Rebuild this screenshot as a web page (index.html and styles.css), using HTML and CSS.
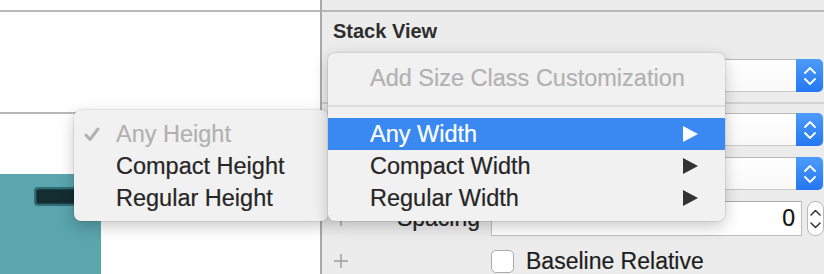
FILE: index.html
```html
<!DOCTYPE html>
<html>
<head>
<meta charset="utf-8">
<link rel="stylesheet" href="styles.css">
</head>
<body>
<div class="app">
  <div class="canvas">
    <div class="strip"></div>
    <div class="scene-row"></div>
    <div class="scene">
      <div class="teal-view"><div class="pill"></div></div>
    </div>
  </div>
  <div class="inspector">
    <div class="strip"></div>
    <h2 class="section-title">Stack View</h2>
    <div class="row r1">
      <div class="lead"></div>
      <div class="popup"><div class="popup-field"></div><div class="popup-step"><svg width="14" height="22" viewBox="0 0 14 22"><polyline points="2,8 7,3 12,8" class="chev-w"/><polyline points="2,14 7,19 12,14" class="chev-w"/></svg></div></div>
    </div>
    <div class="divider"></div>
    <div class="row r2">
      <div class="lead"></div>
      <div class="popup"><div class="popup-field"></div><div class="popup-step"><svg width="14" height="22" viewBox="0 0 14 22"><polyline points="2,8 7,3 12,8" class="chev-w"/><polyline points="2,14 7,19 12,14" class="chev-w"/></svg></div></div>
    </div>
    <div class="row r3">
      <div class="lead"></div>
      <div class="popup"><div class="popup-field"></div><div class="popup-step"><svg width="14" height="22" viewBox="0 0 14 22"><polyline points="2,8 7,3 12,8" class="chev-w"/><polyline points="2,14 7,19 12,14" class="chev-w"/></svg></div></div>
    </div>
    <div class="row r4">
      <div class="lead"><svg class="plus" width="14" height="14" viewBox="0 0 14 14"><path d="M7 0V14M0 7H14"/></svg><span class="label">Spacing</span></div>
      <div class="number"><div class="num-field">0</div><div class="stepper"><svg width="13" height="24" viewBox="0 0 13 24"><polyline points="2,8 6.5,3.5 11,8" class="chev-d"/><polyline points="2,16 6.5,20.5 11,16" class="chev-d"/></svg></div></div>
    </div>
    <div class="row r5">
      <div class="lead"><svg class="plus" width="14" height="14" viewBox="0 0 14 14"><path d="M7 0V14M0 7H14"/></svg></div>
      <div class="checkline"><span class="checkbox"></span><span class="check-label">Baseline Relative</span></div>
    </div>
  </div>
</div>

<div class="menu submenu">
  <div class="item disabled"><span class="tick"><svg width="16" height="15" viewBox="0 0 16 15"><path d="M2 8 L6 12.5 L14 2"/></svg></span>Any Height</div>
  <div class="item"><span class="tick"></span>Compact Height</div>
  <div class="item"><span class="tick"></span>Regular Height</div>
</div>

<div class="menu mainmenu">
  <div class="item disabled">Add Size Class Customization</div>
  <div class="sep"></div>
  <div class="item active">Any Width<svg class="arrow" width="15" height="16" viewBox="0 0 15 16"><polygon points="0,0 15,8 0,16"/></svg></div>
  <div class="item">Compact Width<svg class="arrow" width="15" height="16" viewBox="0 0 15 16"><polygon points="0,0 15,8 0,16"/></svg></div>
  <div class="item">Regular Width<svg class="arrow" width="15" height="16" viewBox="0 0 15 16"><polygon points="0,0 15,8 0,16"/></svg></div>
</div>
</body>
</html>
```

FILE: styles.css
```css
html, body {
  margin: 0;
  padding: 0;
}
body {
  width: 824px;
  height: 274px;
  overflow: hidden;
  font-family: "Liberation Sans", Arial, sans-serif;
  background: #ffffff;
}
.app {
  display: flex;
  width: 824px;
  height: 274px;
}
.canvas {
  width: 320px;
  border-right: 2px solid #a9a9a9;
  background: #ffffff;
  display: flex;
  flex-direction: column;
}
.strip {
  height: 10px;
  border-bottom: 2px solid #b8b8b8;
  flex: none;
}
.scene-row {
  height: 100px;
  border-bottom: 2px solid #b8b8b8;
  flex: none;
}
.scene {
  flex: 1;
  padding-top: 60px;
}
.teal-view {
  width: 101px;
  height: 100px;
  background: #5aa5ae;
  padding-top: 13px;
  box-sizing: border-box;
}
.pill {
  margin-left: 34px;
  width: 60px;
  height: 19px;
  box-sizing: border-box;
  border: 2px solid #2f6c73;
  border-radius: 4px;
  background: #142d30;
  box-shadow: inset 0 0 0 1px #1d4347;
}
.inspector {
  flex: 1;
  background: #ececec;
  display: flex;
  flex-direction: column;
}
.section-title {
  margin: 0;
  padding: 7px 0 0 11px;
  font-size: 20px;
  line-height: 24px;
  font-weight: bold;
  color: #2e2e2e;
}
.row {
  display: grid;
  grid-template-columns: 157px 1fr;
  padding-left: 12px;
  align-items: center;
}
.r1 { margin-top: 16px; }
.r2 { margin-top: 9px; }
.r3 { margin-top: 11px; }
.r4 { margin-top: 11px; }
.r5 { margin-top: 14px; }
.divider {
  margin-top: 10px;
  height: 2px;
  background: #d2d2d2;
}
.lead {
  display: flex;
  align-items: center;
}
.plus path {
  stroke: #9c9c9c;
  stroke-width: 1.4;
  fill: none;
}
.label {
  margin-left: auto;
  padding-right: 11px;
  font-size: 23px;
  color: #222222;
  -webkit-text-stroke: 0.2px #222222;
}
.popup {
  display: flex;
  height: 33px;
  margin-right: 1px;
}
.popup-field {
  flex: 1;
  background: linear-gradient(#ffffff, #f9f9f9);
  border: 1px solid #c9c9c9;
  border-top-color: #b9b9b9;
  border-right: none;
  border-radius: 4px 0 0 4px;
}
.popup-step {
  width: 27px;
  border-radius: 0 5px 5px 0;
  background: linear-gradient(#4d9bf9, #2477f1);
  display: flex;
  align-items: center;
  justify-content: center;
}
.chev-w {
  fill: none;
  stroke: #ffffff;
  stroke-width: 1.8;
  stroke-linecap: round;
  stroke-linejoin: round;
}
.chev-d {
  fill: none;
  stroke: #3a3a3a;
  stroke-width: 1.6;
  stroke-linecap: round;
  stroke-linejoin: round;
}
.number {
  display: flex;
  gap: 5px;
  height: 35px;
}
.num-field {
  flex: 1;
  background: #ffffff;
  border: 1px solid #bdbdbd;
  border-top-color: #acacac;
  text-align: right;
  padding-right: 6px;
  font-size: 23px;
  line-height: 33px;
  color: #111111;
  -webkit-text-stroke: 0.2px #111111;
}
.stepper {
  width: 17px;
  box-sizing: border-box;
  border: 1px solid #b8b8b8;
  border-radius: 8px;
  background: #ffffff;
  display: flex;
  align-items: center;
  justify-content: center;
}
.checkline {
  display: flex;
  align-items: center;
  gap: 12px;
  height: 22px;
}
.checkbox {
  width: 23px;
  height: 23px;
  box-sizing: border-box;
  border: 1px solid #ababab;
  border-radius: 5px;
  background: #ffffff;
}
.check-label {
  font-size: 23px;
  color: #1e1e1e;
  -webkit-text-stroke: 0.2px #1e1e1e;
}
.menu {
  position: absolute;
  box-sizing: border-box;
  background: #f1f1f1;
  border-radius: 7px;
  box-shadow: 0 5px 16px rgba(0, 0, 0, 0.22), 0 0 0 1px rgba(0, 0, 0, 0.07);
  font-size: 23.5px;
  color: #262626;
}
.submenu {
  left: 74px;
  top: 110px;
  width: 254px;
  height: 111px;
  padding: 8px 0 7px;
}
.mainmenu {
  left: 328px;
  top: 53px;
  width: 397px;
  height: 168px;
  padding: 9px 0 7px;
}
.item {
  height: 32px;
  display: flex;
  align-items: center;
  padding-right: 27px;
  white-space: nowrap;
  -webkit-text-stroke: 0.2px currentColor;
}
.mainmenu .item {
  padding-left: 42px;
}
.submenu .item {
  padding-left: 10px;
}
.tick {
  width: 32px;
  display: flex;
  align-items: center;
}
.tick path {
  fill: none;
  stroke: #b1b1b1;
  stroke-width: 3;
  stroke-linecap: round;
  stroke-linejoin: round;
}
.disabled {
  color: #b1b1b1;
}
.active {
  background: #3a89f3;
  color: #ffffff;
}
.arrow {
  margin-left: auto;
  fill: #333333;
}
.active .arrow {
  fill: #ffffff;
}
.sep {
  height: 24px;
  display: flex;
  align-items: center;
}
.sep::after {
  content: "";
  display: block;
  width: 100%;
  height: 2px;
  background: #dcdcdc;
}
```
